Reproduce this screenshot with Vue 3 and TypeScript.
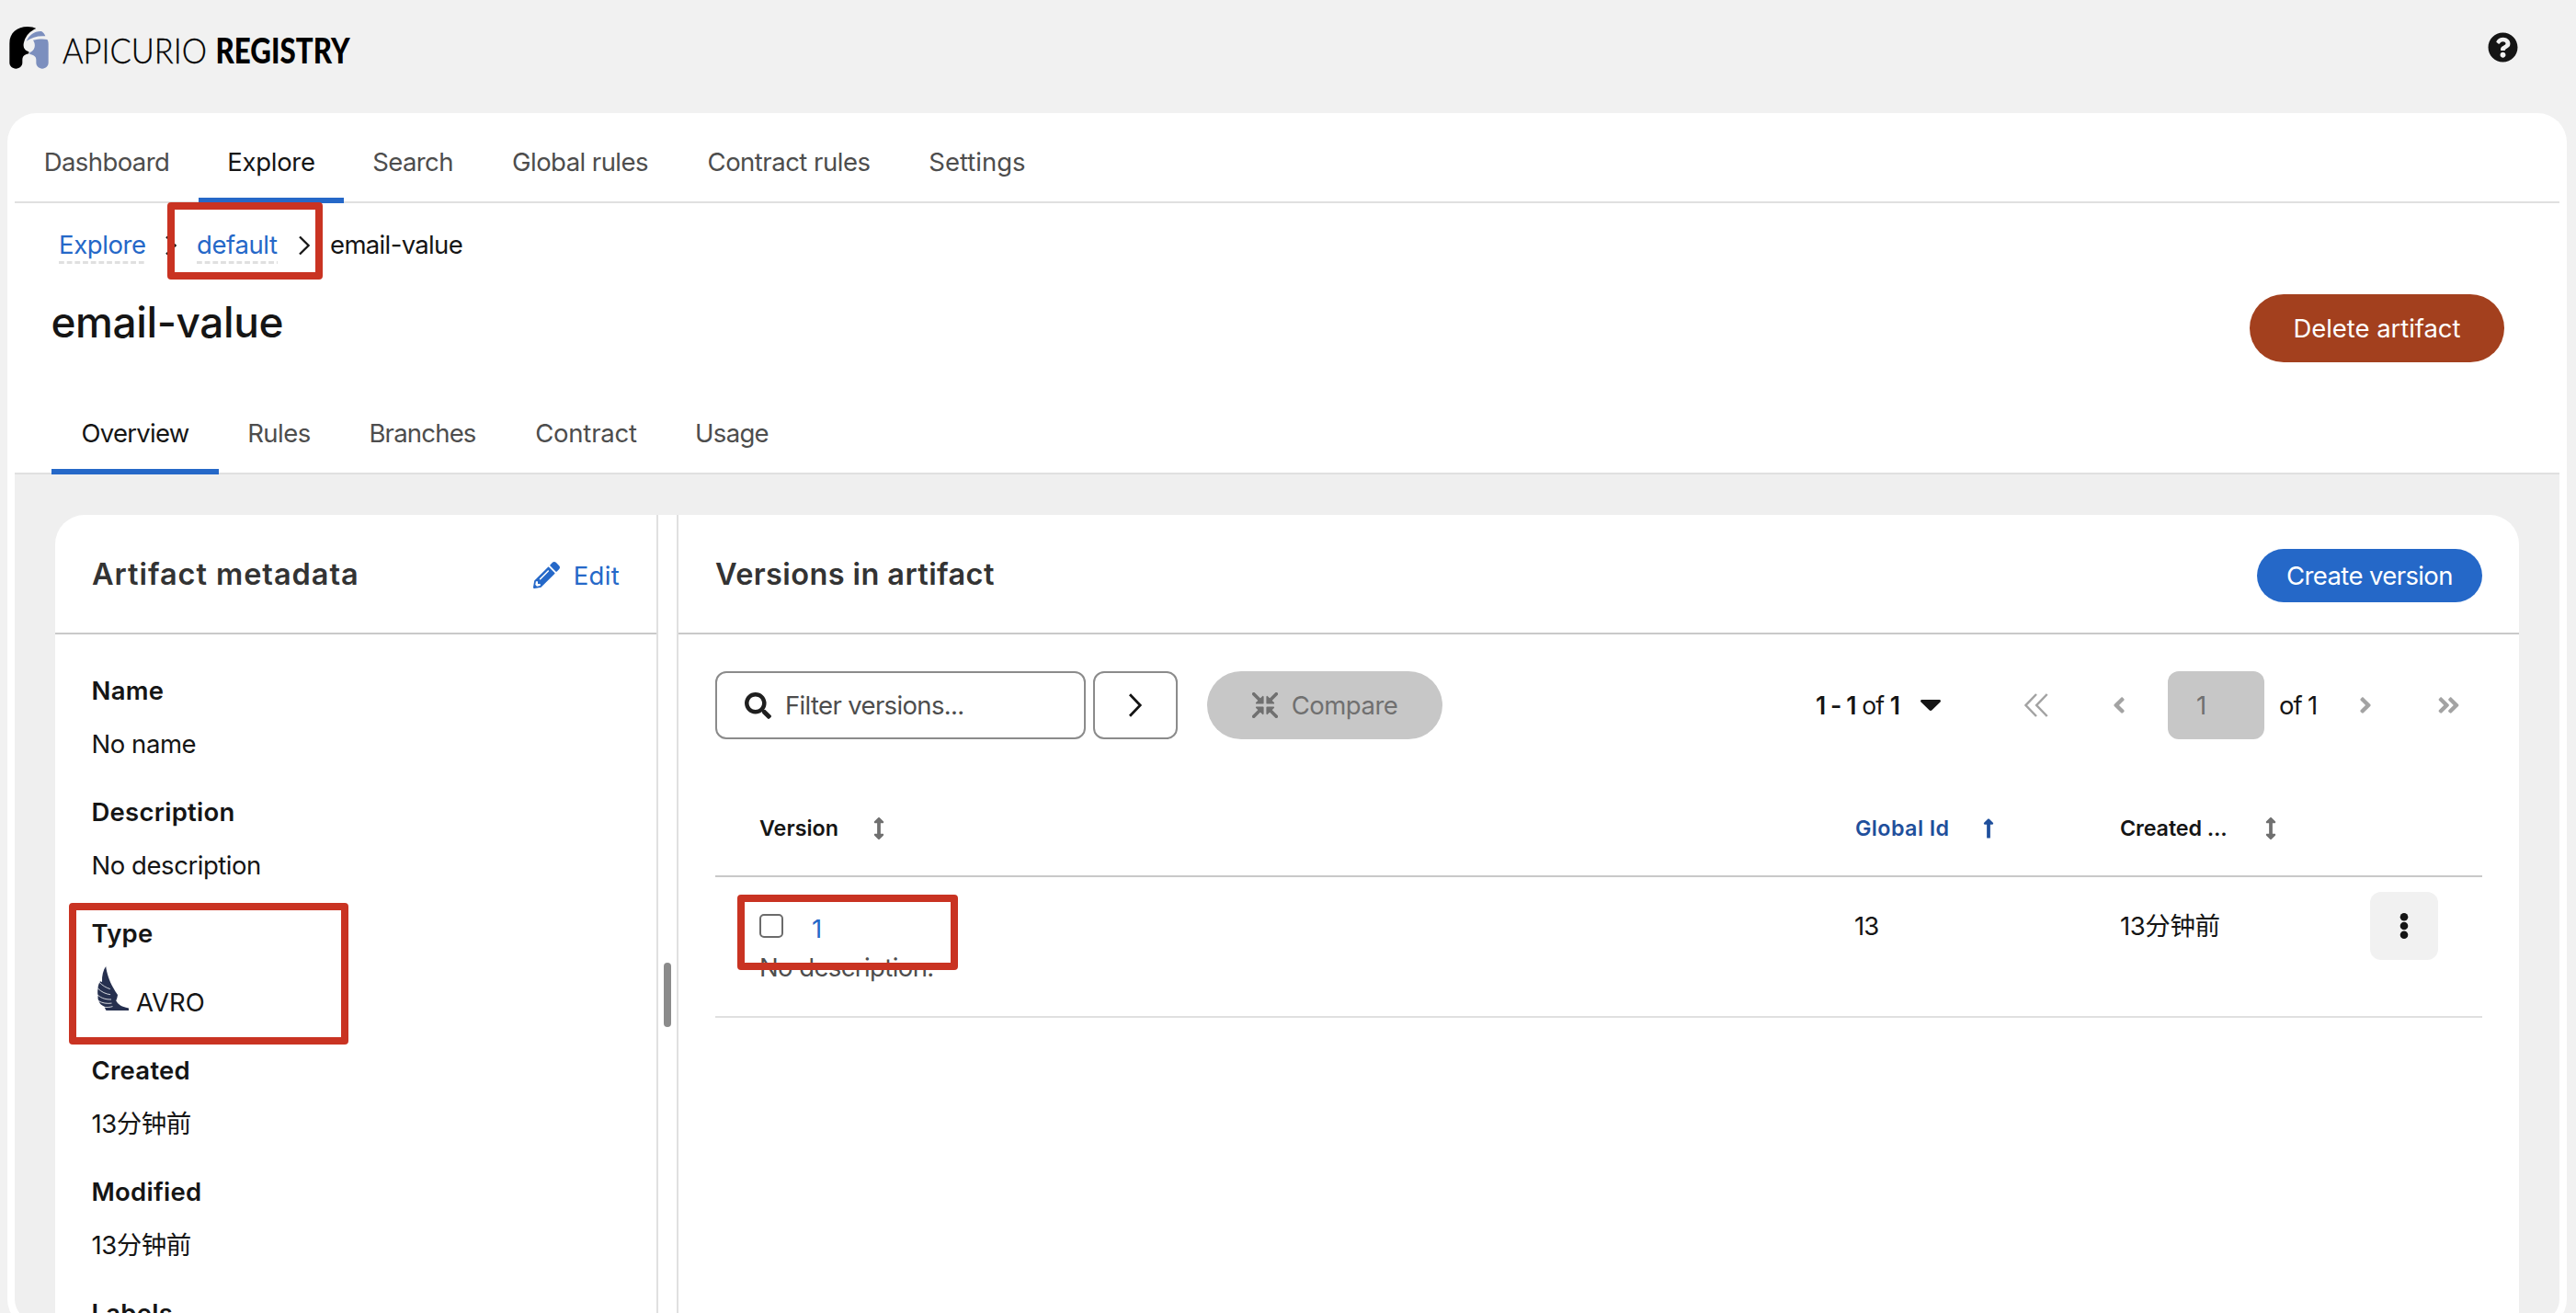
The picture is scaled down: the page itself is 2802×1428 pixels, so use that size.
<script setup lang="ts">
interface Tab {
  label: string
  width: number
  spacing: number
}

const navTabs: Tab[] = [
  { label: 'Dashboard', width: 200, spacing: -0.6 },
  { label: 'Explore', width: 158, spacing: -0.3 },
  { label: 'Search', width: 150, spacing: -0.6 },
  { label: 'Global rules', width: 214, spacing: -0.55 },
  { label: 'Contract rules', width: 240, spacing: -0.5 },
  { label: 'Settings', width: 170, spacing: 0 },
]

const artifactTabs: Tab[] = [
  { label: 'Overview', width: 182, spacing: -0.75 },
  { label: 'Rules', width: 131, spacing: -0.5 },
  { label: 'Branches', width: 181, spacing: -0.8 },
  { label: 'Contract', width: 175, spacing: -0.2 },
  { label: 'Usage', width: 142, spacing: -0.7 },
]

interface Field {
  label: string
  value?: string
  wing?: boolean
}

const fields: Field[] = [
  { label: 'Name', value: 'No name' },
  { label: 'Description', value: 'No description' },
  { label: 'Type', value: 'AVRO', wing: true },
  { label: 'Created', value: '13分钟前' },
  { label: 'Modified', value: '13分钟前' },
  { label: 'Labels' },
]

const tabStyle = (t: Tab) => ({ width: `${t.width}px`, letterSpacing: `${t.spacing}px` })

const angleRight =
  'M224.3 273l-136 136c-9.4 9.4-24.6 9.4-33.9 0l-22.6-22.6c-9.4-9.4-9.4-24.6 0-33.9l96.4-96.4-96.4-96.4c-9.4-9.4-9.4-24.6 0-33.9L54.3 103c9.4-9.4 24.6-9.4 33.9 0l136 136c9.5 9.4 9.5 24.6.1 34z'
const sortBoth =
  'M214.059 377.941H168V134.059h46.059c21.382 0 32.09-25.851 16.971-40.971L144.971 7.029c-9.373-9.373-24.568-9.373-33.941 0L24.971 93.088c-15.119 15.119-4.411 40.971 16.971 40.971H88v243.882H41.941c-21.382 0-32.09 25.851-16.971 40.971l86.059 86.059c9.373 9.373 24.568 9.373 33.941 0l86.059-86.059c15.12-15.119 4.412-40.971-16.97-40.971z'
</script>

<template>
  <div class="app">
    <header class="masthead">
      <svg class="brand" width="400" height="90" viewBox="0 0 400 90">
        <g transform="translate(0 10) scale(.33333)">
          <path
            fill="#000"
            d="M31 112C31 76 56 57 90 57c12 0 21 2 28 6-19 8-33 22-39 42-5 14-1 25 8 31l7 3v6l-8 2c-9 3-13 9-13 18v10c0 11-9 19-21 19s-21-8-21-19z"
          />
          <path fill="#7c8fbe" d="M86 104c10-20 26-33 49-32 6 4 11 9 13 16-24-2-45 4-62 16z" />
          <path
            fill="#7c8fbe"
            d="M108 101c17-4 34-5 46-2 3 4 4 9 4 14v62c0 11-9 19-20 19s-20-8-20-19v-10c0-11-8-16-21-18v-6c16-6 22-24 11-40z"
          />
        </g>
        <text x="68" y="68.6" class="brand-light" textLength="157" lengthAdjust="spacingAndGlyphs">APICURIO</text>
        <text x="234.5" y="68.6" class="brand-bold" textLength="146" lengthAdjust="spacingAndGlyphs">REGISTRY</text>
      </svg>
      <svg class="help" width="33" height="33" viewBox="0 0 512 512">
        <path
          d="M504 256c0 136.997-111.043 248-248 248S8 392.997 8 256C8 119.083 119.043 8 256 8s248 111.083 248 248zM262.655 90c-54.497 0-89.255 22.957-116.549 63.758-3.536 5.286-2.353 12.415 2.715 16.258l34.699 26.31c5.205 3.947 12.621 3.008 16.665-2.122 17.864-22.658 30.113-35.797 57.303-35.797 20.429 0 45.698 13.148 45.698 32.958 0 14.976-12.363 22.667-32.534 33.976C247.128 238.528 216 254.941 216 296v4c0 6.627 5.373 12 12 12h56c6.627 0 12-5.373 12-12v-1.333c0-28.462 83.186-29.647 83.186-106.667 0-58.002-60.165-102-116.531-102zM256 338c-25.365 0-46 20.635-46 46 0 25.364 20.635 46 46 46s46-20.636 46-46c0-25.365-20.635-46-46-46z"
        />
      </svg>
    </header>

    <main class="page">
      <nav class="tabs">
        <a v-for="(t, i) in navTabs" :key="t.label" class="tab" :class="{ active: i === 1 }" :style="tabStyle(t)">{{ t.label }}</a>
      </nav>

      <div class="crumbs">
        <a class="crumb-link first">Explore</a>
        <svg class="crumb-sep" width="14" height="22" viewBox="0 0 14 22"><path d="M2 1.5l9.6 9.5L2 20.5" /></svg>
        <a class="crumb-link second">default</a>
        <svg class="crumb-sep" width="14" height="22" viewBox="0 0 14 22"><path d="M2 1.5l9.6 9.5L2 20.5" /></svg>
        <span class="crumb-current">email-value</span>
      </div>

      <div class="title-row">
        <h1>email-value</h1>
        <button class="btn danger">Delete artifact</button>
      </div>

      <nav class="tabs sub">
        <a v-for="(t, i) in artifactTabs" :key="t.label" class="tab" :class="{ active: i === 0 }" :style="tabStyle(t)">{{ t.label }}</a>
      </nav>

      <div class="body">
        <div class="panels">
          <section class="meta">
            <div class="panel-head">
              <h2 class="wide">Artifact metadata</h2>
              <a class="edit">
                <svg width="29" height="29" viewBox="0 0 512 512">
                  <path
                    d="M497.9 142.1l-46.1 46.1c-4.7 4.7-12.3 4.7-17 0l-111-111c-4.7-4.7-4.7-12.3 0-17l46.1-46.1c18.7-18.7 49.1-18.7 67.9 0l60.1 60.1c18.8 18.7 18.8 49.1 0 67.9zM284.2 99.8L21.6 362.4.4 483.9c-2.9 16.4 11.4 30.6 27.8 27.8l121.5-21.3 262.6-262.6c4.7-4.7 4.7-12.3 0-17l-111-111c-4.8-4.7-12.4-4.7-17.1 0zM124.1 339.9c-5.5-5.5-5.5-14.3 0-19.8l154-154c5.5-5.5 14.3-5.5 19.8 0s5.5 14.3 0 19.8l-154 154c-5.5 5.5-14.3 5.5-19.8 0zM88 424h48v36.3l-64.5 11.3-31.1-31.1L51.7 376H88v48z"
                  />
                </svg>
                Edit
              </a>
            </div>
            <dl>
              <template v-for="f in fields" :key="f.label">
                <dt>{{ f.label }}</dt>
                <dd v-if="f.value" :class="{ typed: f.wing }">
                  <svg v-if="f.wing" class="wing" width="34" height="48" viewBox="0 0 34 48">
                    <path d="M9.2 0C10 7 13 16 17 23c1.6 3 3.2 5.6 5 8-.3 2.500-1 4.500-1.800 6.300 2 3.700 5.300 6.700 13.800 8.200V48H9.500c-1-1.500-1.700-3-2-4.300C4.500 42.500 2 40.300 1.200 37c-.7-1.400-.8-3-.6-4.600C.2 30 0 27.500.4 25 .6 21 1.500 18.300 3 16.200L5 17C4.700 10 6.300 4 9.200 0z" />
                    <path class="gap" d="M1.500 16.800c3.800 4 8 6.500 12.300 7.800M.3 23.800c4 4.200 9 6.300 13.800 6.900M0 31c4.500 3.800 9.500 5.200 15 5M1 37.500c4.200 2.600 9.500 3.300 14.500 2.600M6.500 44.200c3.500.6 7 .3 10-.6" />
                  </svg>
                  {{ f.value }}
                </dd>
              </template>
            </dl>
          </section>

          <div class="splitter"><span class="handle"></span></div>

          <section class="versions">
            <div class="panel-head">
              <h2>Versions in artifact</h2>
              <button class="btn primary">Create version</button>
            </div>

            <div class="toolbar">
              <div class="filter">
                <svg width="29" height="29" viewBox="0 0 512 512">
                  <path
                    d="M505 442.7L405.3 343c-4.5-4.5-10.600-7-17-7H372c27.600-35.300 44-79.700 44-128C416 93.100 322.900 0 208 0S0 93.100 0 208s93.100 208 208 208c48.300 0 92.700-16.400 128-44v16.300c0 6.400 2.500 12.500 7 17l99.700 99.700c9.400 9.400 24.600 9.400 33.900 0l28.300-28.300c9.400-9.400 9.400-24.600.1-34zM208 336c-70.700 0-128-57.200-128-128 0-70.700 57.200-128 128-128 70.700 0 128 57.200 128 128 0 70.700-57.200 128-128 128z"
                  />
                </svg>
                <span>Filter versions...</span>
              </div>
              <div class="go">
                <svg width="18" height="28" viewBox="0 0 18 28"><path d="M3 2.300L14.200 14 3 25.700" /></svg>
              </div>
              <button class="btn compare">
                <svg width="28" height="28" viewBox="0 0 28 28">
                  <g id="arrow">
                    <path class="shaft" d="M1.700 1.700l8 8" />
                    <path class="tip" d="M11.700 4.800v6.900H4.800z" />
                  </g>
                  <use href="#arrow" transform="matrix(-1 0 0 1 28 0)" />
                  <use href="#arrow" transform="matrix(1 0 0 -1 0 28)" />
                  <use href="#arrow" transform="matrix(-1 0 0 -1 28 28)" />
                </svg>
                Compare
              </button>

              <div class="pager">
                <div class="range">
                  <span class="range-text"><b>1 - 1</b> of <b>1</b></span>
                  <svg width="22" height="12" viewBox="0 0 22 12"><path d="M1.500 0h19c1.300 0 1.900 1.500 1 2.400l-9 8.900c-.8.8-2.200.8-3 0l-9-8.900C-.4 1.500.2 0 1.500 0z" /></svg>
                </div>
                <span class="step">
                  <svg class="thin" width="28" height="28" viewBox="0 0 28 28"><path d="M14 2L2.500 14 14 26M25.700 2L14.200 14l11.500 12" /></svg>
                </span>
                <span class="step">
                  <svg width="14" height="28" viewBox="0 0 256 512"><path :d="angleRight" transform="matrix(-1 0 0 1 256 0)" /></svg>
                </span>
                <span class="page-input">1</span>
                <span class="of">of 1</span>
                <span class="step">
                  <svg width="14" height="28" viewBox="0 0 256 512"><path :d="angleRight" /></svg>
                </span>
                <span class="step">
                  <svg width="25" height="28" viewBox="0 0 448 512"><path :d="angleRight" /><path :d="angleRight" transform="translate(192 0)" /></svg>
                </span>
              </div>
            </div>

            <div class="table">
              <div class="tr head">
                <span class="th">Version<svg width="12" height="24" viewBox="0 0 256 512"><path :d="sortBoth" /></svg></span>
                <span class="th sorted">Global Id<svg width="12" height="24" viewBox="0 0 256 512">
                  <path
                    d="M88 166.059V468c0 6.627 5.373 12 12 12h56c6.627 0 12-5.373 12-12V166.059h46.059c21.382 0 32.090-25.851 16.971-40.971l-86.059-86.059c-9.373-9.373-24.569-9.373-33.941 0l-86.059 86.059c-15.119 15.119-4.411 40.971 16.971 40.971H88z"
                  /></svg></span>
                <span class="th">Created ...<svg width="12" height="24" viewBox="0 0 256 512"><path :d="sortBoth" /></svg></span>
              </div>
              <div class="tr row">
                <div class="version">
                  <div class="pick"><span class="box"></span><a>1</a></div>
                  <div class="desc">No description.</div>
                </div>
                <span class="td tight">13</span>
                <span class="td">13分钟前</span>
                <span class="kebab">
                  <svg width="10" height="30" viewBox="0 0 10 30"><circle cx="5" cy="5.200" r="4.300" /><circle cx="5" cy="15" r="4.300" /><circle cx="5" cy="24.800" r="4.300" /></svg>
                </span>
              </div>
            </div>
          </section>
        </div>
      </div>
    </main>

    <div class="mark mark-group"></div>
    <div class="mark mark-type"></div>
    <div class="mark mark-version"></div>
  </div>
</template>

<style>
html,
body {
  margin: 0;
  overflow: hidden;
  background: #f1f1f1;
}
</style>

<style scoped>
.app {
  position: relative;
  width: 2802px;
  height: 1428px;
  overflow: hidden;
  background: #f1f1f1;
  color: #151515;
  font: 400 27.5px/42px Inter, 'Noto Sans CJK SC', sans-serif;
  letter-spacing: -0.4px;
  box-sizing: border-box;
}
.app * {
  box-sizing: border-box;
}
svg {
  display: block;
  flex: none;
}
h1,
h2,
dl,
dd {
  margin: 0;
}
.masthead {
  display: flex;
  justify-content: space-between;
  height: 123px;
}
.brand {
  overflow: visible;
  font-family: Lato, sans-serif;
  letter-spacing: 0;
}
.brand-light {
  font-size: 37.5px;
  font-weight: 300;
  stroke: #000;
  stroke-width: 0.3px;
}
.brand-bold {
  font-size: 37.5px;
  font-weight: 900;
}
.help {
  margin: 35px 63px 0 0;
  fill: #151515;
}
.page {
  width: 2784px;
  height: 1322px;
  margin-left: 8px;
  padding: 8px;
  border-radius: 32px;
  background: #fff;
}
.tabs {
  display: flex;
  height: 90px;
  border-bottom: 2px solid #e0e0e0;
}
.tabs.sub {
  margin-top: 32px;
  padding-left: 40px;
}
.tab {
  position: relative;
  height: 90px;
  line-height: 90px;
  text-align: center;
  white-space: nowrap;
  color: #4d4d4d;
}
.tab.active {
  color: #151515;
}
.tab.active::after {
  content: '';
  position: absolute;
  left: 0;
  right: 0;
  bottom: 0;
  height: 6px;
  background: #2568c8;
}
.crumbs {
  display: flex;
  height: 41px;
  margin: 25px 0 0 48px;
  line-height: 41px;
}
.crumb-link {
  height: 41px;
  line-height: 41px;
  color: #2568c8;
  background: linear-gradient(90deg, #e0e0e0 6px, transparent 6px) 0 100% / 8.700px 3px repeat-x;
}
.first {
  width: 94px;
  margin-right: 21px;
}
.second {
  width: 88px;
  margin-right: 22px;
}
.crumb-sep {
  margin: 10px 21px 0 0;
  fill: none;
  stroke: #151515;
  stroke-width: 2.300px;
}
.crumb-current {
  letter-spacing: -0.65px;
}
.title-row {
  display: flex;
  justify-content: space-between;
  align-items: flex-start;
  height: 74px;
  margin: 33px 60px 0 39.500px;
}
h1 {
  font-size: 46px;
  font-weight: 550;
  line-height: 60px;
  letter-spacing: -0.400px;
}
.btn {
  display: flex;
  align-items: center;
  justify-content: center;
  padding: 0;
  border: 0;
  border-radius: 999px;
  color: #fff;
  font: inherit;
}
.danger {
  width: 277px;
  height: 74px;
  background: #a3401e;
  letter-spacing: -0.06px;
}
.primary {
  width: 245px;
  height: 58px;
  margin-top: 4px;
  background: #2568c8;
  letter-spacing: -0.62px;
}
.body {
  height: 921px;
  padding: 44px 44px 0;
  border-radius: 0 0 24px 24px;
  background: #efefef;
  overflow: hidden;
}
.panels {
  display: flex;
  height: 877px;
  border-radius: 32px 32px 0 0;
  background: #fff;
  overflow: hidden;
}
.meta {
  width: 654px;
}
.panel-head {
  display: flex;
  align-items: center;
  justify-content: space-between;
  height: 130px;
  padding: 0 40px;
  border-bottom: 2px solid #c9c9c9;
}
h2 {
  margin-top: 2px;
  color: #333;
  font-size: 32.500px;
  font-weight: 600;
  line-height: 48px;
  letter-spacing: 0.4px;
}
h2.wide {
  letter-spacing: 0.95px;
}
.edit {
  display: flex;
  align-items: center;
  gap: 15px;
  margin-top: 3px;
  color: #2568c8;
  fill: #2568c8;
  letter-spacing: 0.3px;
}
dl {
  padding: 40px 0 0 39.500px;
}
dt {
  font-weight: 600;
  letter-spacing: 0.25px;
}
dd {
  margin: 16.400px 0 31.600px;
  letter-spacing: -0.450px;
}
dd.typed {
  display: flex;
  align-items: flex-end;
  height: 59px;
  letter-spacing: 0;
}
.wing {
  margin: 0 8px 12px 6.500px;
  fill: #26304f;
}
.wing .gap {
  fill: none;
  stroke: #fff;
  stroke-width: 0.800px;
}
.splitter {
  width: 24px;
  padding: 487px 0 0 6px;
  border: solid #e0e0e0;
  border-width: 0 2px;
}
.handle {
  display: block;
  width: 8px;
  height: 70px;
  border-radius: 4px;
  background: #8b8b8b;
}
.versions {
  flex: 1;
}
.toolbar {
  display: flex;
  margin: 40px 40px 0;
  height: 74px;
}
.filter,
.go {
  display: flex;
  align-items: center;
  height: 74px;
  border: 2px solid #8b8b8b;
  border-radius: 12px;
}
.filter {
  width: 403px;
  padding-left: 30px;
  gap: 15px;
  color: #4d4d4d;
  fill: #1f1f1f;
  letter-spacing: -0.65px;
}
.go {
  justify-content: center;
  width: 92px;
  margin-left: 8px;
  fill: none;
  stroke: #151515;
  stroke-width: 2.800px;
}
.compare {
  width: 256px;
  height: 74px;
  margin-left: 32px;
  gap: 15px;
  background: #c7c7c7;
  color: #707070;
  letter-spacing: -0.5px;
}
.shaft {
  stroke: #707070;
  stroke-width: 3.600px;
  stroke-linecap: round;
}
.tip {
  fill: #707070;
  stroke: #707070;
  stroke-width: 1.800px;
  stroke-linejoin: round;
}
.pager {
  display: flex;
  align-items: center;
  gap: 16px;
  margin-left: auto;
}
.range {
  display: flex;
  align-items: center;
  width: 187px;
  fill: #151515;
}
.range-text {
  width: 114px;
  font-size: 26.500px;
  letter-spacing: -0.900px;
  white-space: nowrap;
}
.range-text b {
  font-weight: 600;
}
.step {
  display: flex;
  justify-content: center;
  width: 74px;
  fill: #a3a3a3;
}
.thin {
  fill: none;
  stroke: #a3a3a3;
  stroke-width: 2.500px;
}
.page-input {
  width: 105px;
  height: 74px;
  padding-left: 31px;
  border-radius: 12px;
  background: #c7c7c7;
  color: #707070;
  line-height: 74px;
}
.of {
  width: 41px;
  white-space: nowrap;
  letter-spacing: -1.100px;
}
.table {
  margin: 46px 40px 0;
}
.tr {
  display: grid;
  grid-template-columns: 1192px 288px 272px 74px;
  padding-left: 48px;
}
.head {
  height: 104px;
  border-bottom: 2px solid #c9c9c9;
}
.th {
  display: flex;
  align-items: center;
  gap: 38px;
  font-size: 23.300px;
  font-weight: 600;
  letter-spacing: 0;
  fill: #707070;
}
.th.sorted {
  color: #1f4f9c;
  fill: #1f4f9c;
  gap: 37px;
  letter-spacing: 0.400px;
}
.th:last-child {
  gap: 41px;
  letter-spacing: -0.100px;
}
.row {
  height: 153px;
  padding-top: 16px;
  border-bottom: 2px solid #e0e0e0;
}
.version {
  padding-top: 16px;
}
.pick {
  display: flex;
  align-items: flex-start;
  height: 42px;
}
.pick a {
  margin: 3px 0 0 31px;
  color: #2568c8;
}
.box {
  width: 26px;
  height: 26px;
  margin-top: 8px;
  border: 2px solid #6b6b6b;
  border-radius: 5px;
}
.desc {
  margin-top: 2.500px;
  color: #4d4d4d;
  letter-spacing: -0.600px;
}
.td {
  line-height: 74px;
  height: 74px;
}
.tight {
  margin-left: -1px;
  letter-spacing: -1px;
}
.kebab {
  display: flex;
  align-items: center;
  justify-content: center;
  height: 74px;
  border-radius: 12px;
  background: #f1f1f1;
  fill: #151515;
}
/* Annotation frames lie over the page content. */
.mark {
  position: absolute;
  border: 8px solid #c93322;
  border-radius: 4px;
}
.mark-group {
  left: 182px;
  top: 220px;
  width: 169px;
  height: 84px;
}
.mark-type {
  left: 75px;
  top: 982px;
  width: 304px;
  height: 154px;
}
.mark-version {
  left: 802px;
  top: 973px;
  width: 240px;
  height: 82px;
}
</style>
